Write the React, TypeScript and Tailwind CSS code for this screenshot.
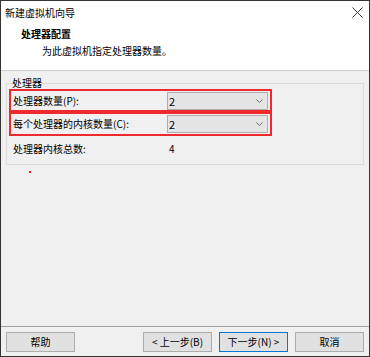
import React from 'react';

const Chevron = () => (
  <svg width="7" height="4" viewBox="0 0 7 4" className="text-[#6b6b6b]">
    <path d="M0.5 0.5 L3.5 3.5 L6.5 0.5" fill="none" stroke="currentColor" strokeWidth="1" />
  </svg>
);

const Combo = ({ value }: { value: string }) => (
  <div className="flex h-[18px] w-[101px] items-center justify-between border border-[#adadad] bg-[#e5e5e5] pl-[1px] pr-[4px]">
    <span className="leading-[12px] text-[11px]">{value}</span>
    <Chevron />
  </div>
);

const WinButton = ({ label, primary }: { label: string; primary?: boolean }) => (
  <button
    className={
      primary
        ? 'flex h-[20px] w-[69px] items-center justify-center border border-[#0078d7] bg-[#e1e1e1] text-[10px] leading-[12px]'
        : 'flex h-[20px] w-[69px] items-center justify-center border border-[#adadad] bg-[#e1e1e1] text-[10px] leading-[12px]'
    }
  >
    {label}
  </button>
);

export default function App() {
  return (
    <div className="flex h-[357px] w-[370px] flex-col border border-[#333333] bg-[#f0f0f0] font-['Noto_Sans_CJK_SC',sans-serif] text-[10px] text-black">
      {/* header */}
      <div className="h-[70px] border-b border-[#d0d0d0] bg-white">
        <div className="flex items-start justify-between pl-[4px] pr-[6px] pt-[5px]">
          <span className="leading-[14px]">新建虚拟机向导</span>
          <svg width="11" height="11" viewBox="0 0 11 11" className="mt-[1px] text-[#333333]">
            <path d="M0.5 0.5 L10.5 10.5 M10.5 0.5 L0.5 10.5" stroke="currentColor" strokeWidth="1" />
          </svg>
        </div>
        <div className="mt-[7px] pl-[20px] font-bold leading-[14px]">处理器配置</div>
        <div className="mt-[3px] pl-[41px] leading-[14px]">为此虚拟机指定处理器数量。</div>
      </div>

      {/* body */}
      <div className="flex flex-1 flex-col">
        <fieldset className="mx-[5px] mt-[6px] border border-[#dcdcdc] pb-[8px] pl-[2px]">
          <legend className="ml-[3px] px-0 leading-[12px]">处理器</legend>
          <div className="flex h-[23px] w-[263px] items-center justify-between border-2 border-[#ee2a2f] pl-[2px] pr-[2px]">
            <span className="leading-[12px]">处理器数量(P):</span>
            <Combo value="2" />
          </div>
          <div className="flex h-[24px] w-[263px] items-center justify-between border-2 border-[#ee2a2f] pl-[2px] pr-[2px]">
            <span className="leading-[12px]">每个处理器的内核数量(C):</span>
            <Combo value="2" />
          </div>
          <div className="mt-[6px] flex leading-[14px]">
            <span className="w-[160px] pl-[4px]">处理器内核总数:</span>
            <span>4</span>
          </div>
        </fieldset>
        <div className="ml-[28px] mt-[6px] h-[2px] w-[2px] bg-[#ee1c24]" />
        <div className="flex-1" />
      </div>

      {/* footer */}
      <div className="flex h-[30px] items-start justify-between border-t border-[#a0a0a0] px-[5px] pt-[5px]">
        <WinButton label="帮助" />
        <div className="flex gap-[7px]">
          <WinButton label="< 上一步(B)" />
          <WinButton label="下一步(N) >" primary />
          <WinButton label="取消" />
        </div>
      </div>
    </div>
  );
}
